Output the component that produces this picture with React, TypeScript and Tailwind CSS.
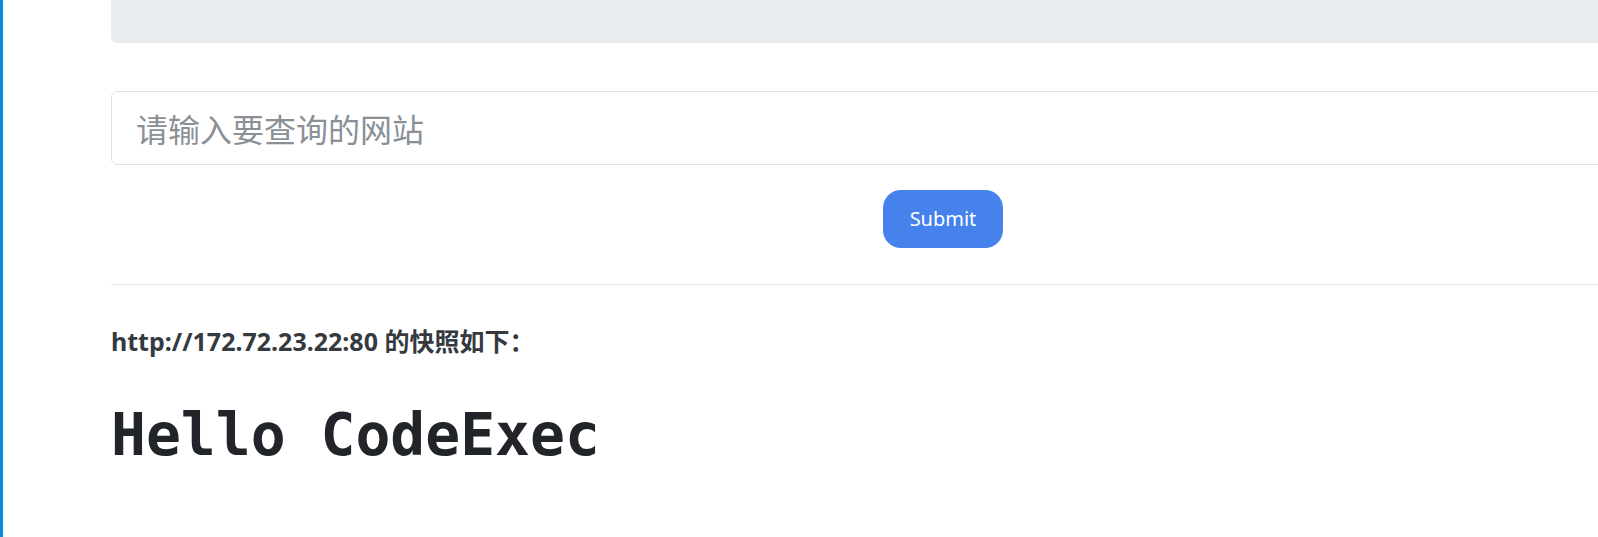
import { useState } from 'react';

export default function App() {
  const [url, setUrl] = useState('');
  const target = 'http://172.72.23.22:80';

  return (
    <div className="h-[537px] w-[1598px] overflow-hidden border-l-[3px] border-[#0a8ad6] bg-white">
      <div className="ml-[108px] w-[1664px]">
        <div className="h-[43px] rounded-b-[6px] bg-[#e9ecef]" />

        <form
          className="mt-[48px] flex flex-col items-center"
          onSubmit={(e) => e.preventDefault()}
        >
          <input
            type="text"
            value={url}
            onChange={(e) => setUrl(e.target.value)}
            placeholder="请输入要查询的网站"
            className="h-[74px] w-full rounded-[6px] border border-[#dee2e6] px-[24px] text-[32px] text-[#495057] outline-none placeholder:text-[#8a9096] [font-family:'Noto_Sans_CJK_SC',sans-serif]"
          />
          <button
            type="submit"
            className="mt-[25px] h-[58px] w-[120px] rounded-[18px] bg-[#4582ec] text-[20px] text-white [font-family:'Noto_Sans','Noto_Sans_CJK_SC',sans-serif]"
          >
            Submit
          </button>
        </form>

        <hr className="mt-[36px] border-t border-[#e2e5e8]" />

        <h5 className="mt-[40px] text-[25px] font-bold leading-[32px] text-[#343a40] [font-family:'Noto_Sans','Noto_Sans_CJK_SC',sans-serif]">
          {target} 的快照如下：
        </h5>

        <h1 className="mt-[43px] text-[58px] font-bold leading-[70px] text-[#212529] [font-family:'DejaVu_Sans_Mono',monospace]">
          Hello CodeExec
        </h1>
      </div>
    </div>
  );
}
